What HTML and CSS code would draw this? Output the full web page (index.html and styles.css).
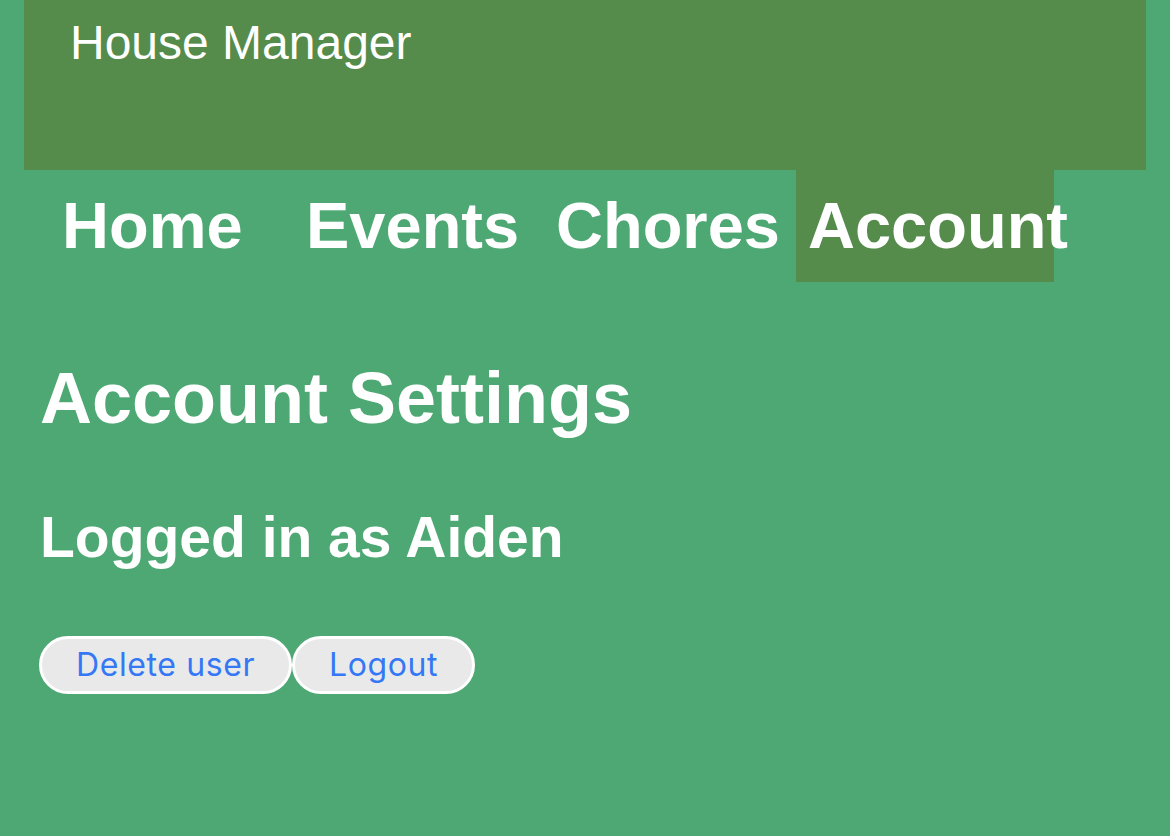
FILE: index.html
```html
<!DOCTYPE html>
<html lang="en">
<head>
<meta charset="utf-8">
<title>House Manager</title>
<link rel="stylesheet" href="styles.css">
</head>
<body>
<header class="site-header">
  <h1 class="site-title">House Manager</h1>
</header>
<nav class="main-nav">
  <a class="nav-link nav-home" href="#">Home</a>
  <a class="nav-link nav-events" href="#">Events</a>
  <a class="nav-link nav-chores" href="#">Chores</a>
  <a class="nav-link nav-account active" href="#">Account</a>
</nav>
<main class="content">
  <h2 class="page-title">Account Settings</h2>
  <h3 class="user-line">Logged in as Aiden</h3>
  <div class="actions">
    <button class="pill-btn" type="button">Delete user</button>
    <button class="pill-btn" type="button">Logout</button>
  </div>
</main>
</body>
</html>
```

FILE: styles.css
```css
html, body {
  margin: 0;
  padding: 0;
}

body {
  background: #4ea874;
  color: #ffffff;
  font-family: "Liberation Sans", Arial, sans-serif;
  min-height: 836px;
}

.site-header {
  margin: 0 24px;
  height: 170px;
  box-sizing: border-box;
  padding: 15px 46px 0;
  background: #558b4b;
}

.site-title {
  margin: 0;
  font-size: 48px;
  font-weight: normal;
  line-height: normal;
}

.main-nav {
  display: flex;
  padding-left: 50px;
}

.nav-link {
  display: block;
  box-sizing: border-box;
  height: 112px;
  padding: 18px 12px 0;
  color: #ffffff;
  text-decoration: none;
  font-size: 65px;
  font-weight: bold;
  line-height: normal;
  white-space: nowrap;
  overflow: visible;
}

.nav-home { width: 244px; }
.nav-events { width: 250px; }
.nav-chores { width: 252px; }
.nav-account { width: 258px; }

.nav-link.active {
  background: #558b4b;
}

.content {
  padding: 0 40px;
}

.page-title {
  margin: 75px 0 0;
  font-size: 72px;
  font-weight: bold;
  line-height: normal;
}

.user-line {
  margin: 65px 0 0;
  font-size: 57px;
  font-weight: bold;
  line-height: normal;
}

.actions {
  display: flex;
  margin-top: 66px;
  margin-left: -1px;
}

.pill-btn {
  height: 58px;
  box-sizing: border-box;
  padding: 0 34px;
  border: 3px solid #ffffff;
  border-radius: 29px;
  background: #e9e9e9;
  color: #3478f6;
  font-family: Inter, "Liberation Sans", sans-serif;
  font-size: 32px;
  letter-spacing: 0.6px;
  line-height: 1;
  cursor: pointer;
}
```
